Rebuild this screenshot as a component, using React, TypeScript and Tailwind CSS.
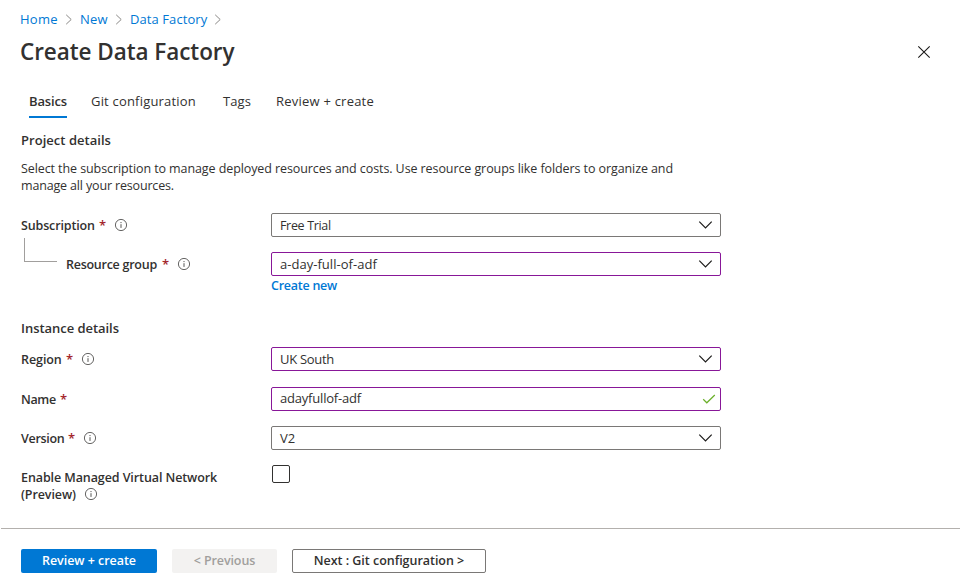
import React from "react";

type TextProps = { className?: string; children: React.ReactNode };

const Label = ({ className = "", children }: TextProps) => (
  <span className={"inline-block whitespace-pre text-[12.5px] font-semibold " + className}>{children}</span>
);

const Info = ({ className = "" }: { className?: string }) => (
  <svg className={"shrink-0 " + className} width="14" height="14" viewBox="0 0 14 14" fill="none" stroke="#555452">
    <circle cx="7" cy="7" r="5.6" strokeWidth=".9" />
    <path d="M7 6.2v3.7M7 4v1.1" strokeWidth="1" />
  </svg>
);

const Chevron = () => (
  <svg width="15" height="10" viewBox="0 0 15 10" fill="none" stroke="#1b1a19" strokeWidth="1.2">
    <path d="M1.3 1.6 7.5 7.8 13.7 1.6" />
  </svg>
);

const Check = () => (
  <svg width="14" height="10" viewBox="0 0 14 10" fill="none" stroke="#6bb02a" strokeWidth="1.2">
    <path d="M1.2 5.3 4.8 8.8 12.8 1" />
  </svg>
);

const Crumb = () => (
  <svg className="ml-[7px]" width="8" height="11" viewBox="0 0 8 11" fill="none" stroke="#8a8886">
    <path d="M1.2.8 6.2 5.5 1.2 10.2" />
  </svg>
);

const Star = () => <span className="ml-1 w-[7px] text-[13px] font-semibold text-[#a4262c]">*</span>;

type FieldProps = { changed?: boolean; valid?: boolean; children: React.ReactNode };

function Field({ changed, valid, children }: FieldProps) {
  return (
    <div
      className={
        "flex h-6 w-[450px] items-center justify-between rounded-[2px] border pl-2 " +
        (changed ? "border-[#881798]" : "border-[#7a7876]") +
        (valid ? " pr-[4px]" : " pr-[7px]")
      }
    >
      {children}
      {valid ? <Check /> : <Chevron />}
    </div>
  );
}

export default function App() {
  return (
    <div className="h-[588px] w-[960px] overflow-hidden bg-white font-['Open_Sans','Noto_Sans',sans-serif] text-[13px] leading-[17px] text-[#323130]">
      <nav className="flex h-[38px] items-center pl-5 text-[#0078d4]">
        <a className="w-[38px] tracking-[0.25px]">Home</a>
        <Crumb />
        <a className="ml-[7px] w-7 tracking-[0.15px]">New</a>
        <Crumb />
        <a className="ml-[7px] w-[77px] whitespace-nowrap tracking-[0.08px]">Data Factory</a>
        <Crumb />
      </nav>
      <header className="flex h-7 items-center justify-between pr-[29px] pl-5">
        <h1 className="text-[22.5px] leading-7 font-semibold tracking-[-0.06px]">Create Data Factory</h1>
        <svg width="14" height="14" viewBox="0 0 14 14" stroke="#1b1a19" strokeWidth="1.1">
          <path d="M1.3 1.3 12.7 12.7M12.7 1.3 1.3 12.7" />
        </svg>
      </header>
      <div className="mt-5 flex h-8 pl-[29px] leading-[30px] whitespace-nowrap">
        <div className="w-[38px] border-b-2 border-[#0078d4] font-semibold tracking-[-0.143px]">Basics</div>
        <div className="ml-6 w-[105px] tracking-[0.194px]">Git configuration</div>
        <div className="ml-[27px] w-7 tracking-[0.09px]">Tags</div>
        <div className="ml-[25px] tracking-[0.223px]">Review + create</div>
      </div>
      <main className="pl-[21px]">
        <h2 className="mt-3 h-5 leading-5 font-semibold tracking-[0.034px]">Project details</h2>
        <p className="mt-2.5 text-[12.5px] whitespace-nowrap">
          <span className="tracking-[-0.09px]">Select the subscription to manage deployed resources and costs. Use resource groups like folders to organize and</span>
          <br />
          <span className="tracking-[-0.16px]">manage all your resources.</span>
        </p>

        <div className="mt-[19px] flex h-6 items-center">
          <div className="flex w-[250px] items-center">
            <Label className="w-[74px] tracking-[-0.145px]">Subscription</Label>
            <Star />
            <Info className="ml-2" />
          </div>
          <Field><span className="text-[12.5px] tracking-[-0.33px]">Free Trial</span></Field>
        </div>
        <div className="mt-[15px] flex h-6 items-center">
          <div className="flex w-[250px] items-center">
            <i className="-mt-7 mr-[9px] ml-[3px] h-6 w-[33px] border-b border-l border-[#a19f9d]" />
            <Label className="w-[92px] tracking-[-0.261px]">Resource group</Label>
            <Star />
            <Info className="ml-2" />
          </div>
          <Field changed><span className="tracking-[0.03px]">a-day-full-of-adf</span></Field>
        </div>
        <div className="h-5 pl-[250px] leading-[19px] text-[#0078d4]">
          <a className="text-[12.5px] font-semibold tracking-[-0.25px]">Create new</a>
        </div>

        <h2 className="mt-[22px] h-5 leading-5 font-semibold tracking-[-0.042px]">Instance details</h2>
        <div className="mt-[9px] flex h-6 items-center">
          <div className="flex w-[250px] items-center">
            <Label className="w-[41px] tracking-[-0.078px]">Region</Label>
            <Star />
            <Info className="ml-2" />
          </div>
          <Field changed><span className="tracking-[-0.293px]">UK South</span></Field>
        </div>
        <div className="mt-4 flex h-6 items-center">
          <div className="flex w-[250px] items-center">
            <Label className="w-[35px] tracking-[-0.34px]">Name</Label>
            <Star />
          </div>
          <Field changed valid><span className="pb-0.5 tracking-[-0.198px]">adayfullof-adf</span></Field>
        </div>
        <div className="mt-[15px] flex h-6 items-center">
          <div className="flex w-[250px] items-center">
            <Label className="w-[43px] tracking-[-0.3px]">Version</Label>
            <Star />
            <Info className="ml-2" />
          </div>
          <Field><span className="tracking-[-0.094px]">V2</span></Field>
        </div>
        <div className="mt-[15px] flex h-[38px]">
          <div className="w-[251px] pt-1">
            <Label className="tracking-[-0.091px]">Enable Managed Virtual Network</Label>
            <div className="flex items-center">
              <Label className="w-[55px] tracking-[-0.1px]">(Preview)</Label>
              <Info className="-mt-0.5 ml-2" />
            </div>
          </div>
          <span className="size-[18px] rounded-[2px] border border-[#323130]" />
        </div>
      </main>
      <footer className="mt-[25px] ml-px flex border-t border-[#b3b0ad] pt-5 pl-5">
        <button className="flex h-6 w-[136px] items-center justify-center rounded-[2px] bg-[#0078d4] pb-0.5 text-white">
          <Label className="tracking-[-0.04px]">Review + create</Label>
        </button>
        <button className="ml-[15px] flex h-6 w-[105px] items-center justify-center rounded-[2px] bg-[#f3f2f1] pb-0.5 text-[#a19f9d]">
          <Label className="tracking-[-0.102px]">{"< Previous"}</Label>
        </button>
        <button className="ml-[15px] flex h-6 w-[194px] items-center justify-center rounded-[2px] border border-[#7a7876] pb-0.5">
          <Label className="tracking-[-0.03px]">{"Next : Git configuration >"}</Label>
        </button>
      </footer>
    </div>
  );
}
